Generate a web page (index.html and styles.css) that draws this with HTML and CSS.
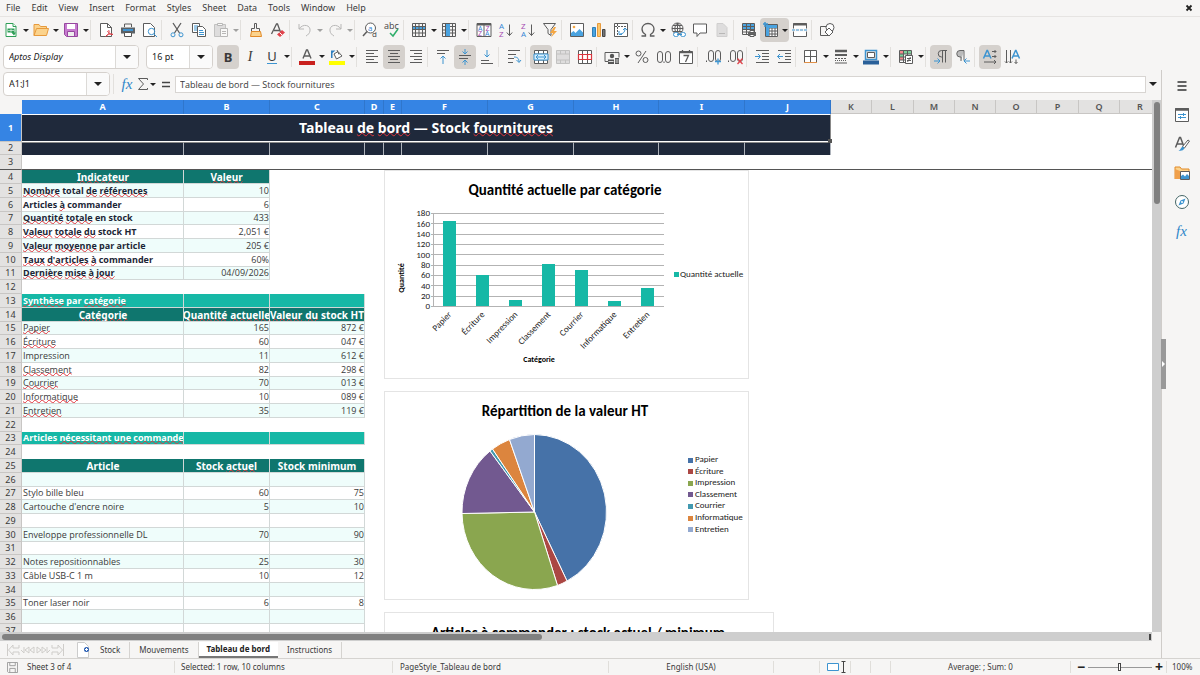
FILE: index.html
```html
<!DOCTYPE html>
<html lang="fr">
<head>
<meta charset="utf-8">
<title>Tableau de bord</title>
<link rel="stylesheet" href="styles.css">
</head>
<body>
<header class="menubar">
<nav class="menus">
<button>File</button><button>Edit</button><button>View</button><button>Insert</button><button>Format</button><button>Styles</button><button>Sheet</button><button>Data</button><button>Tools</button><button>Window</button><button>Help</button>
</nav>
<button class="close" aria-label="Close"><svg viewBox="0 0 8 8"><path d="M1.5 1.5l5 5m0-5l-5 5" stroke="#222" stroke-width="1.8"/></svg></button>
</header>

<div class="toolbar standard">
<button aria-label="New"><svg viewBox="0 0 16 16"><path class="gn" d="M3 1.500h7l3 3v10H3z"/><path class="gn" d="M10 1.500v3h3"/><path d="M4.500 6.500h7v4h-7zM8 10l5 .5-2 3z" fill="#2f9e57"/><path d="M5 8.500h6M8 7v3" stroke="#fff" stroke-width=".6"/></svg></button><i class="dd"></i>
<button aria-label="Open"><svg viewBox="0 0 16 16"><path d="M1 13.500v-11h5l1.500 2h6v2M1 13.500l2.500-7h12l-2 7z" fill="#fbd38d" stroke="#e79a3c"/></svg></button><i class="dd"></i>
<button aria-label="Save"><svg viewBox="0 0 16 16"><path d="M1.500 1.500h13v13h-11l-2-2z" fill="#c77bd0" stroke="#97489f"/><path d="M4 2h8v5H4z" fill="#fff"/><path d="M4.500 14v-4.500h7V14" fill="#eee" stroke="#97489f"/></svg></button><i class="dd"></i><i class="sep"></i>
<button aria-label="Export as PDF"><svg viewBox="0 0 16 16"><path class="k w" d="M2.500 1.500h7l4 4v9h-11z"/><path class="k" d="M9.500 1.500v4h4"/><path d="M8 14c3-2 4-4 2.500-6M9.500 9c1 2 3 4 5.500 3.500M7.500 14.500c2-2 4-3 7-2.500" fill="none" stroke="#e0434b"/></svg></button>
<button aria-label="Print"><svg viewBox="0 0 16 16"><path class="k" d="M4.500 5V2h7v3"/><path d="M1 5.500h14v6H1z" fill="#5c6267"/><path d="M3 8h10" stroke="#3f93d0" stroke-width="2"/><path d="M4.500 10.500h7v4h-7z" fill="#fff" stroke="#555"/></svg></button>
<button aria-label="Print preview"><svg viewBox="0 0 16 16"><path class="k w" d="M1.500 1.500h7l4 4v9h-11z"/><circle class="b" cx="9.500" cy="9.500" r="3.200"/><path class="b" d="M12 12l3 3"/></svg></button><i class="sep"></i>
<button aria-label="Cut"><svg viewBox="0 0 16 16"><path class="k" d="M4 1l6.500 10M12 1L5.500 11" stroke-width="1.300"/><circle class="b" cx="4" cy="12.800" r="2"/><circle class="b" cx="12" cy="12.800" r="2"/></svg></button>
<button aria-label="Copy"><svg viewBox="0 0 16 16"><path class="k w" d="M1.500 1.500h7v9h-7z"/><path class="b" d="M3 4h4M3 6h3M3 8h3"/><path class="k w" d="M6.500 4.500h5l3 3v7h-8z"/><path class="b" d="M8 8.500h4M8 10.500h5M8 12.500h5"/></svg></button>
<button class="off" aria-label="Paste"><svg viewBox="0 0 16 16"><path d="M1.500 2.500h11v12h-11z" fill="#bbb" stroke="#777"/><path class="k w" d="M4.500 1.500h5v2h-5zM7.500 6.500h7v8h-7z"/><path class="k" d="M9 9.500h4M9 11.500h4"/></svg></button><i class="dd off"></i><i class="sep"></i>
<button aria-label="Clone formatting"><svg viewBox="0 0 16 16"><path class="k" d="M6.500 1.500h2v5h3v3h-8v-3h3z"/><path d="M3.500 9.500h9l1 5H2.500z" fill="#fbd38d" stroke="#e28a28"/></svg></button>
<button aria-label="Clear direct formatting"><svg viewBox="0 0 16 16"><path class="k" d="M1.500 12L6.500 2h1l3 8M4 8.500h6" stroke-width="1.300"/><path d="M7 12.500l5-4.500 3 2.500-5 4.500z" fill="#e0434b"/><path d="M9.500 10.500l2.500 2.500" stroke="#fff"/></svg></button><i class="sep"></i>
<button class="off" aria-label="Undo"><svg viewBox="0 0 16 16"><path class="k" d="M2 2v5h5M2 7c4-6 12-4 11 2-.3 2-2 4-4 5"/></svg></button><i class="dd off"></i>
<button class="off" aria-label="Redo"><svg viewBox="0 0 16 16"><path class="k" d="M14 2v5H9M14 7C10 1 2 3 3 9c.3 2 2 4 4 5"/></svg></button><i class="dd off"></i><i class="sep"></i>
<button aria-label="Find and replace"><svg viewBox="0 0 16 16"><circle class="k w" cx="8.500" cy="6" r="5"/><path class="k" d="M5 9.500L1 14" stroke-width="1.500"/><text x="6" y="8.500" class="tb" font-size="8">a</text><text x="10" y="15" font-size="8" fill="#444">d</text></svg></button>
<button aria-label="Spelling"><svg viewBox="0 0 16 16"><text x="0" y="7" font-size="9" fill="#444">abc</text><path d="M6 11l3 3 5-7" fill="none" stroke="#2fae6a" stroke-width="1.500"/></svg></button><i class="sep"></i>
<button aria-label="Row"><svg viewBox="0 0 16 16"><path d="M1 4h14v4H1z" fill="#4aa3e0"/><path class="k" d="M1.500 1.500h13v13h-13zM1 4.500h14M1 7.500h14M1 11h14M4.500 1v14M8 1v14M11.500 1v14"/></svg></button><i class="dd"></i>
<button aria-label="Column"><svg viewBox="0 0 16 16"><path class="k" d="M1.500 1.500h13v13h-13zM1 4.500h14M1 8h14M1 11h14M4.500 1v14M8.500 1v14M11.500 1v14"/><path d="M5 2h4v12H5z" fill="#4aa3e0"/></svg></button><i class="dd"></i><i class="sep"></i>
<button aria-label="Sort"><svg viewBox="0 0 16 16"><path class="k w" d="M1 1.500h14v13H1zM8 2v12"/><path class="k" d="M1 2.500h14" stroke-width="2"/><text x="2" y="9" class="tb" font-size="7">A</text><text x="2" y="14" class="tp" font-size="7">Z</text><text x="9.500" y="9" class="tp" font-size="7">Z</text><text x="9" y="14" class="tb" font-size="7">A</text></svg></button>
<button aria-label="Sort ascending"><svg viewBox="0 0 16 16"><text x="1" y="7" class="tb" font-size="8">A</text><text x="1" y="15" class="tp" font-size="8">Z</text><path class="k" d="M11.500 2.500v11M8.800 10.500l2.700 3 2.700-3"/></svg></button>
<button aria-label="Sort descending"><svg viewBox="0 0 16 16"><text x="1" y="7" class="tp" font-size="8">Z</text><text x="1" y="15" class="tb" font-size="8">A</text><path class="k" d="M11.500 2.500v11M8.800 10.500l2.700 3 2.700-3"/></svg></button>
<button aria-label="AutoFilter"><svg viewBox="0 0 16 16"><path class="k" d="M1.500 1.500h12l-4.500 6v6l-3-2v-4z"/><path d="M12 5l-4 6h3l-2 4.500 6-6.500h-3l2-4z" fill="#f5a742"/></svg></button><i class="sep"></i>
<button aria-label="Image"><svg viewBox="0 0 16 16"><path class="k w" d="M1.500 1.500h13v13h-13z"/><circle cx="5" cy="5" r="1.300" fill="#f5a742"/><path d="M2 14l0-3 2.500-2 2 2 4-4L14 10.500V14z" fill="#4aa3e0"/></svg></button>
<button aria-label="Chart"><svg viewBox="0 0 16 16"><path d="M1.500 5.500h3v9h-3z" fill="#4aa3e0" stroke="#2e7fb8"/><path d="M6.500 1.500h3v13h-3z" fill="#fbc66b" stroke="#e79a3c"/><path d="M11.500 7.500h2.500v7h-2.500z" fill="#777" stroke="#444"/></svg></button>
<button aria-label="Pivot table"><svg viewBox="0 0 16 16"><path class="k w" d="M1.500 1.500h13v13h-13z"/><path class="k" d="M2 4.500h12M4.500 2v12" stroke-dasharray="2 1"/><path class="b" d="M6 9v3.500h3M7 12c3 0 5-2 5-5M10 8l2-2 2 2"/></svg></button><i class="sep"></i>
<button aria-label="Special character"><svg viewBox="0 0 16 16"><path class="k" d="M1.500 14h4v-1.500C3 11 2 9 2 7c0-3 2.500-5.500 6-5.500S14 4 14 7c0 2-1 4-3.500 5.500V14h4" stroke-width="1.300"/></svg></button><i class="dd"></i>
<button aria-label="Hyperlink"><svg viewBox="0 0 16 16"><circle class="k" cx="7.500" cy="6.500" r="5.500"/><path class="k" d="M2 6.500h11M3 3.500h9M3 9.500h9M7.500 1v11M7.500 1c-3.500 3-3.500 8 0 11M7.500 1c3.500 3 3.500 8 0 11"/><rect class="b w" x="3.500" y="10.500" width="5" height="4" rx="2"/><rect class="b w" x="10.500" y="10.500" width="5" height="4" rx="2"/><path class="b" d="M7 12.500h5"/></svg></button>
<button aria-label="Comment"><svg viewBox="0 0 16 16"><path class="k w" d="M1.500 2h13v9H8l-3 3.500V11H1.500z"/></svg></button>
<button class="off" aria-label="Headers and footers"><svg viewBox="0 0 16 16"><path d="M3 1.500h6l4 4v9H3z" fill="#bbb" stroke="#999"/><path class="k" d="M5 11.500h6"/></svg></button><i class="sep"></i>
<button aria-label="Define print area"><svg viewBox="0 0 16 16"><path d="M1 2h12v5H1z" fill="#4aa3e0"/><path class="k" d="M1.500 1.500h12v11h-12zM1 4.500h12M1 7.500h12M1 10h12M5.500 1v11M9.500 1v11"/><path d="M7 10h8v4H7z" fill="#666"/><path class="k w" d="M9 12.500h4v2H9zM9 8.500h4v2H9z"/></svg></button>
<span class="pressed"><button aria-label="Freeze rows and columns"><svg viewBox="0 0 16 16"><path d="M6 6h9v9H6z" fill="#fff"/><path class="k" d="M2.500 2.500h12v12h-12zM2 6h13M2 9h13M2 12h13M6 2v13M9 2v13M12 2v13"/><path d="M3 3h11v3H6v8H3z" fill="#4aa3e0"/><path class="b" d="M0 2h5M2 0v5" stroke-width="1.500"/></svg></button><i class="dd"></i></span>
<button aria-label="Split window"><svg viewBox="0 0 16 16"><path class="k w" d="M1.500 1.500h13v13h-13z"/><path class="k" d="M1 2.500h14" stroke-width="2"/><path d="M0 8h16" stroke="#f6f5f4" stroke-width="3"/><path class="b" d="M0 8h16" stroke-dasharray="3 1"/></svg></button><i class="sep"></i>
<button aria-label="Show draw functions"><svg viewBox="0 0 16 16"><path class="k" d="M1.500 4.500h8v9h-8z"/><circle class="k w" cx="11" cy="5.500" r="4"/><path class="k w" d="M10 6l4 4-4 4-4-4z"/></svg></button>
</div>

<div class="toolbar formatting">
<div class="combo font"><input aria-label="Font name" value="Aptos Display"><button aria-label="Font list"><i class="dd big"></i></button></div>
<div class="combo size"><input aria-label="Font size" value="16 pt"><button aria-label="Size list"><i class="dd big"></i></button></div>
<button class="on glyph" aria-label="Bold"><b>B</b></button>
<button class="glyph" aria-label="Italic"><em>I</em></button>
<button class="glyph" aria-label="Underline"><span class="u">U</span></button><i class="dd"></i><i class="sep"></i>
<button aria-label="Font color"><svg viewBox="0 0 16 16"><path class="k" d="M4 9.500L7.500 1h1L12 9.500M5.500 7h5" stroke-width="1.400"/><path d="M0 12h16v4H0z" fill="#c9211e"/></svg></button><i class="dd"></i>
<button aria-label="Background color"><svg viewBox="0 0 16 16"><path class="k w" d="M5 5l4-2.500L13 7 7.500 10z"/><path class="k" d="M8 1l2 4.500"/><path d="M2 1.500h4.500l-3 2.500v5H2z" fill="#2f7fc0"/><path d="M0 12h16v4H0z" fill="#ff0"/></svg></button><i class="dd"></i><i class="sep"></i>
<button aria-label="Align left"><svg viewBox="0 0 16 16"><path class="k" d="M2 1.500h12M2 4.500h8M2 7.500h12M2 10.500h8M2 13.500h12"/></svg></button>
<button class="on" aria-label="Align center"><svg viewBox="0 0 16 16"><path class="k" d="M2 1.500h12M4 4.500h8M2 7.500h12M4 10.500h8M2 13.500h12"/></svg></button>
<button aria-label="Align right"><svg viewBox="0 0 16 16"><path class="k" d="M2 1.500h12M6 4.500h8M2 7.500h12M6 10.500h8M2 13.500h12"/></svg></button><i class="sep"></i>
<button aria-label="Align top"><svg viewBox="0 0 16 16"><path class="k" d="M2 1.500h12M2 4.500h8"/><path class="b" d="M8 15V7M5.500 9.500L8 7l2.500 2.500"/></svg></button>
<button class="on" aria-label="Center vertically"><svg viewBox="0 0 16 16"><path class="k" d="M2 6.500h12M2 9.500h9"/><path class="b" d="M8 0v5M5.500 2.500L8 5l2.500-2.500M8 16v-5M5.500 13.500L8 11l2.500 2.500"/></svg></button>
<button aria-label="Align bottom"><svg viewBox="0 0 16 16"><path class="k" d="M2 11.500h8M2 14.500h12"/><path class="b" d="M8 1v7M5.500 5.500L8 8l2.500-2.500"/></svg></button><i class="sep"></i>
<button aria-label="Wrap text"><svg viewBox="0 0 16 16"><path class="k" d="M2 1.500h12M2 5.500h8M2 9.500h6M2 13.500h5"/><path class="b" d="M8 8c4 0 5 2 5 5M10.500 11l2.500 2.500 2-2.500"/></svg></button><i class="sep"></i>
<button class="on" aria-label="Merge and center"><svg viewBox="0 0 16 16"><path class="k w" d="M1.500 1.500h13v13h-13zM1 5h14M1 11h14M5.500 1v14M10.500 1v14"/><path d="M1 5h14v6H1z" fill="#d9effc" stroke="#3d94d0"/><path class="b" d="M3 8h10M5 6L3 8l2 2M11 6l2 2-2 2"/></svg></button>
<button class="off" aria-label="Merge cells"><svg viewBox="0 0 16 16"><path d="M1.500 1.500h13v13h-13zM1 5h14M1 11h14M5.500 1v4M10.500 1v4M5.500 11v4M10.500 11v4" fill="#bbb" stroke="#777"/></svg></button>
<button aria-label="Split cells"><svg viewBox="0 0 16 16"><path class="k w" d="M1.500 1.500h13v13h-13zM5.500 1v14M10.500 1v14"/><path d="M1 5.500h14M1 10.500h14M1.500 5v6M5.500 5v6M10.500 5v6M14.500 5v6" stroke="#d9363e" stroke-width="1.200"/></svg></button><i class="sep"></i>
<button aria-label="Currency"><svg viewBox="0 0 16 16"><path class="k" d="M1 12.500v-9h14v5M1 12.500h3"/><circle cx="8" cy="7" r="2.200" fill="#555"/><path d="M4 10.500h6V15H4zM11 9h4v6h-4z" fill="#555"/><path d="M4.500 12.500h5M11.500 11h3M11.500 13h3" stroke="#ddd"/></svg></button><i class="dd"></i>
<button aria-label="Percent"><svg viewBox="0 0 16 16"><circle class="k" cx="4.500" cy="4.500" r="2.500"/><circle class="k" cx="11.500" cy="11" r="2.500"/><path class="k" d="M12 2L4 14"/></svg></button>
<button aria-label="Number"><svg viewBox="0 0 16 16"><rect class="k" x="1.500" y="2.500" width="5" height="11" rx="2.500"/><rect class="k" x="9.500" y="2.500" width="5" height="11" rx="2.500"/><path d="M7.500 12.500h1v1.500h-1z" fill="#555"/></svg></button>
<button aria-label="Date"><svg viewBox="0 0 16 16"><path class="k w" d="M1.500 2.500h13v12h-13z"/><path class="k" d="M1 3.500h14M4.500 1v3M11.500 1v3M5.500 6.500h5L7.500 13" stroke-width="1.300"/></svg></button><i class="sep"></i>
<button aria-label="Add decimal place"><svg viewBox="0 0 16 16"><rect class="k" x="3.500" y="1.500" width="5" height="11" rx="2.500"/><rect class="k" x="10.500" y="1.500" width="5" height="11" rx="2.500"/><path d="M1 11.500h1V13H1z" fill="#555"/><path class="b" d="M10 12.500h6M13 9.500v6" stroke-width="1.300"/></svg></button>
<button aria-label="Delete decimal place"><svg viewBox="0 0 16 16"><rect class="k" x="3.500" y="1.500" width="5" height="11" rx="2.500"/><rect class="k" x="10.500" y="1.500" width="5" height="11" rx="2.500"/><path d="M1 11.500h1V13H1z" fill="#555"/><path d="M10.500 9.500l5 5.500m0-5.500l-5 5.500" stroke="#e0434b" stroke-width="1.300"/></svg></button><i class="sep"></i>
<button aria-label="Increase indent"><svg viewBox="0 0 16 16"><path class="k" d="M2 1.500h13M8 4.500h7M8 7.500h7M8 10.500h7M2 13.500h13"/><path class="b" d="M1 7.500h5M4 5l2.500 2.500L4 10"/></svg></button>
<button aria-label="Decrease indent"><svg viewBox="0 0 16 16"><path class="k" d="M2 1.500h13M9 4.500h6M9 7.500h6M9 10.500h6M2 13.500h13"/><path class="b" d="M1.500 7.500H7M4 5L1.500 7.500 4 10"/></svg></button><i class="sep"></i>
<button aria-label="Borders"><svg viewBox="0 0 16 16"><path class="k w" d="M1.500 1.500h12v12h-12zM7.500 2v12M2 7.500h12"/><path d="M1 13.500h13" stroke="#e09048"/></svg></button><i class="dd"></i>
<button aria-label="Border style"><svg viewBox="0 0 16 16"><path class="k" d="M2 2h12" stroke-width="2.500"/><path class="k" d="M2 6h12" stroke-width="2"/><path class="k" d="M2 9.500h12" stroke-dasharray="2 1"/><path class="k" d="M2 11.500h12" stroke-dasharray="1 1"/><path class="k" d="M2 14h12"/></svg></button><i class="dd"></i>
<button aria-label="Border color"><svg viewBox="0 0 16 16"><path d="M2.500 1.500h11v9h-11z" fill="#e7e5e2" stroke="#3d94d0" stroke-width="1.500"/><path class="k w" d="M4.500 3.500h7v5h-7z"/><path d="M0 11.500h16v4H0z" fill="#2a6099"/></svg></button><i class="dd"></i><i class="sep"></i>
<button aria-label="Conditional formatting"><svg viewBox="0 0 16 16"><path class="k w" d="M1.500 1.500h12v12h-12z"/><path d="M2 2h4v3H2zM2 8h4v3H2z" fill="#f08a8e"/><path d="M6 2h7v3H6zM2 5h4v3H2z" fill="#7fd09b"/><path class="k" d="M1 5h12M1 8h12M1 11h12M5.500 1v12M9.500 1v12"/><path class="k w" d="M7.500 6.500h7v8h-7z"/><path class="k" d="M9 9.500h4M9 11.500h4M12.500 8l-3 5"/></svg></button><i class="dd"></i><i class="sep"></i>
<button class="on" aria-label="Left to right"><svg viewBox="0 0 16 16"><path class="k" d="M14 1.500H8.500a3.200 3.200 0 0 0 0 6.500H9M9.500 1.500v12M12.500 1.500v12"/><path class="b" d="M1 12h6M4.500 9.500L7 12l-2.500 2.500"/></svg></button>
<button aria-label="Right to left"><svg viewBox="0 0 16 16"><path d="M9 1.500H5a3.200 3.200 0 0 0 0 6.500h1v4M9 1.500v10" fill="#bbb" stroke="#666"/><path class="b" d="M15 12H9M11.500 9.500L9 12l2.500 2.500"/></svg></button><i class="sep"></i>
<button class="on" aria-label="Text direction from left to right"><svg viewBox="0 0 16 16"><path class="b" d="M1.500 9.500L5 1.500h.5L9 9.500M2.500 7h5" stroke-width="1.500"/><path class="k" d="M10 2.500h4M10 7.500h4M2 13h12M12.500 1l1.500 1.500L12.500 4M12.500 6L14 7.500 12.500 9M12 11l2 2-2 2"/></svg></button>
<button aria-label="Text direction from top to bottom"><svg viewBox="0 0 16 16"><path class="b" d="M8 9.500l3.500-8h.5l3.500 8M9.500 7h5" stroke-width="1.500"/><path class="k" d="M2.500 1v13M6.500 1v13M12 10.500v4M1 12.500L2.500 14 4 12.500M5 12.500L6.500 14 8 12.500M10.500 13l1.500 1.500 1.500-1.500"/></svg></button>
</div>

<div class="workspace">
<main class="document">
<div class="formulabar">
<div class="combo namebox"><input aria-label="Name box" value="A1:J1"><button aria-label="Names"><i class="dd big"></i></button></div>
<i class="sep"></i>
<button class="fx" aria-label="Function wizard">fx</button>
<button class="sigma" aria-label="Select function"><svg viewBox="0 0 12 14"><path class="k" d="M10.500 3V1.500h-9L6.500 7l-5 5.500h9V11"/></svg></button><i class="dd"></i>
<button class="equals" aria-label="Formula"><svg viewBox="0 0 10 10"><path d="M1 3.500h8M1 7.500h8" stroke="#444" stroke-width="1.500"/></svg></button>
<input class="formula" aria-label="Formula input" value="Tableau de bord — Stock fournitures">
<button class="expand" aria-label="Expand formula bar"><i class="dd big"></i></button>
</div>
<div class="sheetrow">
<div class="sheet">
<table class="grid">
<colgroup><col class="c0"><col class="ca"><col class="cb"><col class="cc"><col class="cd"><col class="ce"><col class="cf"><col class="cf"><col class="ch"><col class="cf"><col class="cf"><col class="ck"><col class="cl"><col class="ck"><col class="ck"><col class="ck"><col class="cl"><col class="ck"><col></colgroup>
<thead><tr><th class="corner"></th><th>A</th><th>B</th><th>C</th><th>D</th><th>E</th><th>F</th><th>G</th><th>H</th><th>I</th><th>J</th><th class="n">K</th><th class="n">L</th><th class="n">M</th><th class="n">N</th><th class="n">O</th><th class="n">P</th><th class="n">Q</th><th class="n r">R</th></tr></thead>
<tbody class="frozen">
<tr class="r1"><th>1</th><td class="title" colspan="10">Tableau <s>de</s> <s>bord</s> — Stock <s>fournitures</s><i class="handle"></i></td></tr>
<tr class="r2"><th>2</th><td></td><td></td><td></td><td></td><td></td><td></td><td></td><td></td><td></td><td></td></tr>
<tr class="r3"><th>3</th><td colspan="18"></td></tr>
</tbody>
<tbody class="body">
<tr class="head"><th>4</th><td><s>Indicateur</s></td><td><s>Valeur</s></td></tr>
<tr class="t k2"><th>5</th><td><s>Nombre</s> total <s>de</s> <s>références</s></td><td>10</td></tr>
<tr class="k2"><th>6</th><td>Articles <s>à</s> commander</td><td>6</td></tr>
<tr class="t k2"><th>7</th><td><s>Quantité</s> <s>totale</s> en stock</td><td>433</td></tr>
<tr class="k2"><th>8</th><td><s>Valeur</s> <s>totale</s> <s>du</s> stock HT</td><td>2,051 €</td></tr>
<tr class="t k2"><th>9</th><td><s>Valeur</s> <s>moyenne</s> par article</td><td>205 €</td></tr>
<tr class="k2"><th>10</th><td><s>Taux</s> <s>d'articles</s> <s>à</s> commander</td><td>60%</td></tr>
<tr class="t k2"><th>11</th><td><s>Dernière</s> <s>mise</s> <s>à</s> <s>jour</s></td><td>04/09/2026</td></tr>
<tr class="none"><th>12</th><td colspan="3"></td></tr>
<tr class="band"><th>13</th><td><s>Synthèse</s> par <s>catégorie</s></td><td></td><td></td></tr>
<tr class="head"><th>14</th><td><s>Catégorie</s></td><td class="clip"><span><s>Quantité</s> <s>actuelle</s></span></td><td class="clip"><span><s>Valeur</s> <s>du</s> stock HT</span></td></tr>
<tr class="t"><th>15</th><td><s>Papier</s></td><td>165</td><td>872 €</td></tr>
<tr><th>16</th><td><s>Écriture</s></td><td>60</td><td>047 €</td></tr>
<tr class="t"><th>17</th><td>Impression</td><td>11</td><td>612 €</td></tr>
<tr><th>18</th><td><s>Classement</s></td><td>82</td><td>298 €</td></tr>
<tr class="t"><th>19</th><td><s>Courrier</s></td><td>70</td><td>013 €</td></tr>
<tr><th>20</th><td><s>Informatique</s></td><td>10</td><td>089 €</td></tr>
<tr class="t"><th>21</th><td><s>Entretien</s></td><td>35</td><td>119 €</td></tr>
<tr class="none"><th>22</th><td colspan="3"></td></tr>
<tr class="band"><th>23</th><td>Articles <s>nécessitant</s> <s>une</s> <s>commande</s></td><td></td><td></td></tr>
<tr class="none"><th>24</th><td colspan="3"></td></tr>
<tr class="head"><th>25</th><td>Article</td><td>Stock <s>actuel</s></td><td>Stock minimum</td></tr>
<tr class="t"><th>26</th><td></td><td></td><td></td></tr>
<tr><th>27</th><td>Stylo bille bleu</td><td>60</td><td>75</td></tr>
<tr class="t"><th>28</th><td>Cartouche d'encre noire</td><td>5</td><td>10</td></tr>
<tr><th>29</th><td></td><td></td><td></td></tr>
<tr class="t"><th>30</th><td>Enveloppe professionnelle DL</td><td>70</td><td>90</td></tr>
<tr><th>31</th><td></td><td></td><td></td></tr>
<tr class="t"><th>32</th><td>Notes repositionnables</td><td>25</td><td>30</td></tr>
<tr><th>33</th><td>Câble USB-C 1 m</td><td>10</td><td>12</td></tr>
<tr class="t"><th>34</th><td></td><td></td><td></td></tr>
<tr><th>35</th><td>Toner laser noir</td><td>6</td><td>8</td></tr>
<tr class="t"><th>36</th><td></td><td></td><td></td></tr>
<tr><th>37</th><td></td><td></td><td></td></tr>
</tbody>
</table>

<svg class="chart chart-bar" viewBox="0 0 364 208">
<text class="ct" x="181" y="25">Quantité actuelle par catégorie</text>
<path class="gl" d="M47 43.500h233M47 53.500h233M47 64.500h233M47 74.500h233M47 84.500h233M47 95.500h233M47 105.500h233M47 115.500h233M47 126.500h233M47 136.500h233M49.500 43v93"/>
<g class="ya"><text x="46" y="46">180</text><text x="46" y="57">160</text><text x="46" y="67">140</text><text x="46" y="77">120</text><text x="46" y="88">100</text><text x="46" y="98">80</text><text x="46" y="108">60</text><text x="46" y="119">40</text><text x="46" y="129">20</text><text x="46" y="139">0</text></g>
<g class="bars"><rect x="59" y="51" width="13" height="85"/><rect x="92" y="105" width="13" height="31"/><rect x="125" y="130" width="13" height="6"/><rect x="158" y="94" width="13" height="42"/><rect x="191" y="100" width="13" height="36"/><rect x="224" y="131" width="13" height="5"/><rect x="257" y="118" width="13" height="18"/></g>
<g class="xa"><text transform="translate(68 145) rotate(-46)">Papier</text><text transform="translate(101 145) rotate(-46)">Écriture</text><text transform="translate(134 145) rotate(-46)">Impression</text><text transform="translate(167 145) rotate(-46)">Classement</text><text transform="translate(200 145) rotate(-46)">Courrier</text><text transform="translate(233 145) rotate(-46)">Informatique</text><text transform="translate(266 145) rotate(-46)">Entretien</text></g>
<text class="ax" x="155" y="192">Catégorie</text>
<text class="ax" transform="translate(20 108) rotate(-90)">Quantité</text>
<path d="M290 102h5v5h-5z" fill="#16b8a6"/><text class="lg" x="296" y="107">Quantité actuelle</text>
</svg>

<svg class="chart chart-pie" viewBox="0 0 364 208">
<text class="ct" x="181" y="25">Répartition de la valeur HT</text>
<g stroke="#fff" stroke-linejoin="round">
<path fill="#4672a8" d="M150.500 121V43.500A72.500 77.500 0 0 1 183 190z"/>
<path fill="#ab4744" d="M150.500 121L183 190A72.500 77.500 0 0 1 173.500 194.500z"/>
<path fill="#8aa64f" d="M150.500 121L173.500 194.500A72.500 77.500 0 0 1 78 122.500z"/>
<path fill="#725990" d="M150.500 121L78 122.500A72.500 77.500 0 0 1 106 60z"/>
<path fill="#4299b0" d="M150.500 121L106 60A72.500 77.500 0 0 1 108.500 58z"/>
<path fill="#dc853e" d="M150.500 121L108.500 58A72.500 77.500 0 0 1 125.500 48.500z"/>
<path fill="#93a9d0" d="M150.500 121L125.500 48.500A72.500 77.500 0 0 1 150.500 43.500z"/>
</g>
<path fill="#4672a8" d="M304 67h5v5h-5z"/><path fill="#ab4744" d="M304 78h5v5h-5z"/><path fill="#8aa64f" d="M304 90h5v5h-5z"/><path fill="#725990" d="M304 101h5v5h-5z"/><path fill="#4299b0" d="M304 113h5v5h-5z"/><path fill="#dc853e" d="M304 125h5v5h-5z"/><path fill="#93a9d0" d="M304 136h5v5h-5z"/>
<g class="lg"><text x="311" y="71">Papier</text><text x="311" y="83">Écriture</text><text x="311" y="94">Impression</text><text x="311" y="106">Classement</text><text x="311" y="117">Courrier</text><text x="311" y="129">Informatique</text><text x="311" y="141">Entretien</text></g>
</svg>

<svg class="chart chart-stock" viewBox="0 0 389 208"><text class="ct" x="194" y="26">Articles à commander : stock actuel / minimum</text></svg>
</div>
<div class="vscroll"><i></i></div>
</div>
<div class="hscroll"><i></i><b></b></div>
<div class="tabs">
<span class="tabnav"><button aria-label="First sheet"><svg viewBox="0 0 14 14"><path d="M1.500 1v12M13 2v3H7V2L2.500 7 7 12V9h6v3"/></svg></button><button aria-label="Previous sheet"><svg viewBox="0 0 14 14"><path d="M13 4v6L9 7zM8 4v6L4 7zM3 4v6L0 7"/></svg></button><button aria-label="Next sheet"><svg viewBox="0 0 14 14"><path d="M1 4v6l4-3zM6 4v6l4-3zM11 4v6l3-3"/></svg></button><button aria-label="Last sheet"><svg viewBox="0 0 14 14"><path d="M12.500 1v12M1 2v3h6V2l4.500 5L7 12V9H1v3"/></svg></button></span>
<button class="addsheet" aria-label="Add sheet"><svg viewBox="0 0 14 16"><path d="M1.500.5h7l4 4v11h-11z" fill="#fff" stroke="#ccc"/><circle cx="10.500" cy="7.500" r="2.500" fill="#2a5fb4"/><path d="M9 7.500h3M10.500 6v3" stroke="#fff"/></svg></button>
<button class="tab">Stock</button><button class="tab">Mouvements</button><button class="tab active">Tableau de bord</button><button class="tab">Instructions</button>
</div>
</main>
<aside class="sidebar">
<button aria-label="Sidebar settings"><svg viewBox="0 0 16 16"><path d="M3.500 4h9M3.500 8h9M3.500 12h9" stroke="#333" stroke-width="1.500"/></svg></button>
<button aria-label="Properties"><svg viewBox="0 0 16 16"><path class="k w" d="M1.500 1.500h13v13h-13z"/><path class="k" d="M1 2.500h14" stroke-width="2.500"/><path class="b" d="M4 7.500h8M9.500 6v3M4 10.500h8M6.500 9v3"/></svg></button>
<button aria-label="Styles"><svg viewBox="0 0 16 16"><path class="k" d="M1.500 11.500L5.500 1.500h1l3 8M3 8h6" stroke-width="1.500"/><path class="k w" d="M14 4l1.500 1-5 7-2-1.500z"/><path d="M8.500 10.500l2 1.500c-1 3-4 3-6 2.500 2-.5 2-2.500 4-4z" fill="#3d94d0"/></svg></button>
<button aria-label="Gallery"><svg viewBox="0 0 16 16"><path d="M1 14V2h5l1.500 2H15v3" fill="#fbd38d" stroke="#e28a28"/><path d="M1 4v10h5V6z" fill="#f0a04b"/><path class="k w" d="M6.500 6.500h9v8h-9z"/><path d="M7 14v-3l2-1.500 2 2L13 9l2 2v3z" fill="#3d94d0"/></svg></button>
<button aria-label="Navigator"><svg viewBox="0 0 16 16"><circle cx="8" cy="8" r="6.500" fill="#fff" stroke="#466"/><path d="M11.500 4.500l-2 5-5 2 2-5z" fill="#3d94d0"/><circle cx="8" cy="8" r="1" fill="#fff"/></svg></button>
<button class="fx" aria-label="Functions">fx</button>
<i class="grip"></i>
</aside>
</div>

<footer class="statusbar">
<span class="s1"><svg viewBox="0 0 12 12"><path d="M.5.5h11v11h-10l-1-1zM3 .5V4h6V.5M3 11.500V7h6v4.500" fill="none" stroke="#999"/></svg>Sheet 3 of 4</span>
<span class="s2">Selected: 1 row, 10 columns</span>
<span class="s3">PageStyle_Tableau de bord</span>
<span class="s4">English (USA)</span>
<span class="s5"></span>
<span class="s6"><svg viewBox="0 0 20 12"><path d="M.5 2.500h11v7H.5z" fill="#fff" stroke="#3d94d0"/><path d="M14.500.5h4M14.500 11.500h4M16.500 1v10" stroke="#444" fill="none"/></svg></span>
<span class="s7"></span><span class="s7"></span>
<span class="s8">Average: ; Sum: 0</span>
<span class="s9"><button aria-label="Zoom out">−</button><input type="range" aria-label="Zoom" min="0" max="100" value="49"><button aria-label="Zoom in">+</button></span>
<span class="s10">100%</span>
</footer>
</body>
</html>
```
FILE: styles.css
```css
* { box-sizing: border-box; }
body {
  margin: 0;
  height: 100vh;
  display: flex;
  flex-direction: column;
  overflow: hidden;
  background: #f6f5f4;
  color: #3a3a3a;
  font: 9px/12px "Noto Sans", sans-serif;
}
button, input { font: inherit; color: inherit; margin: 0; padding: 0; border: 0; background: none; }
button { display: inline-flex; align-items: center; justify-content: center; }
svg { display: block; }
.k { stroke: #5c5c5c; fill: none; }
.b { stroke: #3d94d0; fill: none; }
.gn { stroke: #2f9e57; fill: #fff; }
.w { fill: #fff; }
.tb { fill: #3584d4; }
.tp { fill: #a446b0; }

.menubar { display: flex; justify-content: space-between; height: 17px; flex: none; padding: 0 6px 0 6px; border-bottom: 1px solid #e6e4e2; }
.menus { display: flex; gap: 11px; }
.close { width: 10px; }
.close svg { width: 8px; height: 8px; }

.toolbar { display: flex; align-items: center; height: 27px; flex: none; }
.toolbar button { width: 22px; height: 24px; flex: none; border-radius: 4px; }
.toolbar svg { width: 16px; height: 16px; overflow: visible; font-family: "Open Sans", sans-serif; }
.toolbar .on, .pressed { background: #d5d1cd; border-radius: 4px; }
.pressed { display: flex; align-items: center; }
.pressed button { width: 21px; }
.off { opacity: .4; }
.sep { width: 5px; height: 20px; flex: none; border-left: 1px solid #e2e0dd; }
.dd { width: 8px; flex: none; display: flex; justify-content: center; }
.dd::before { content: ""; border: 3px solid transparent; border-top-color: #222; border-bottom: 0; }
.dd.big::before { border-width: 4px 4px 0; }
.combo { display: flex; height: 24px; flex: none; background: #fff; border: 1px solid #d5d1cd; border-radius: 4px; overflow: hidden; }
.combo input { flex: 1; min-width: 0; padding-left: 5px; color: #222; }
.combo button { width: 23px; height: 22px; border-left: 1px solid #dcdad7; border-radius: 0; background: #fafafa; }
.standard { height: 26px; }
.formatting { padding-left: 3px; }
.font { width: 136px; margin-right: 7px; }
.font input { font-style: italic; }
.size { width: 67px; margin-right: 4px; }
.glyph { font-size: 13px; }
.glyph em { font-family: "Liberation Serif", serif; font-size: 14px; }
.u { line-height: 14px; border-bottom: 1px solid #3d94d0; }

.workspace { flex: 1; display: flex; min-height: 0; }
.document { flex: 1; min-width: 0; display: flex; flex-direction: column; border-right: 1px solid #cfccc9; }
.formulabar { display: flex; align-items: center; height: 30px; flex: none; padding: 0 1px 2px 3px; }
.namebox { width: 107px; margin-right: 3px; }
.formulabar .fx { width: 18px; }
.fx { font: italic 15px/18px "Liberation Serif", serif; color: #2f86c9; }
.sigma { width: 13px; }
.sigma svg { width: 12px; height: 14px; }
.equals { width: 18px; }
.equals svg { width: 10px; height: 10px; }
.formula { flex: 1; min-width: 0; height: 17px; padding-left: 4px; background: #fff; border: 1px solid #d8d5d2; font-family: "Open Sans", sans-serif; }
.expand { width: 14px; height: 20px; }

.sheetrow { flex: 1; display: flex; min-height: 0; }
.sheet { flex: 1; position: relative; min-width: 0; overflow: hidden; background: #fff; }
.grid { width: 100%; table-layout: fixed; border-collapse: separate; border-spacing: 0; }
.c0 { width: 22px; } .ca { width: 162px; } .cb { width: 86px; } .cc { width: 95px; } .cd { width: 19px; } .ce { width: 18px; }
.cf { width: 86px; } .ch { width: 85px; } .ck { width: 41px; } .cl { width: 42px; }
.grid th, .grid td { height: 14px; padding: 0; line-height: 12px; white-space: nowrap; overflow: hidden; }
.grid tbody th { font-weight: 400; background: #e3e2e1; border-right: 1px solid #c8c6c4; border-bottom: 1px solid #c8c6c4; }
.grid thead th { background: #3584e4; color: #fff; border-right: 1px solid #2f76cc; }
.grid thead .n { background: #e3e2e1; color: #555; border-right-color: #c8c6c4; border-bottom: 1px solid #c8c6c4; font-weight: 600; }
.grid thead .corner { background: #f6f5f4; border: 0; }
.grid thead .r { border-right: 0; text-align: left; padding-left: 17px; }
s { text-decoration: underline wavy #e0343c 1px; text-decoration-skip-ink: none; text-underline-offset: -1px; }
.grid .r1 th { background: #3584e4; color: #fff; font-weight: 700; }
.grid .r1 th, .grid .r1 td { height: 28px; }
.grid .title { position: relative; overflow: visible; background: #1f293b; color: #fff; text-align: center; font-size: 14px; font-weight: 700; border: 1px solid #fff; border-left: 0; border-right-color: #888; }
.handle { position: absolute; right: -2px; bottom: -2px; width: 4px; height: 4px; background: #555; }
.grid .r2 td, .grid .r2 th { height: 13px; }
.grid .r2 td { background: #1f293b; border-right: 1px solid #aeb3bb; border-top: 1px solid #8a8a8a; }
.grid .r3 th, .grid .r3 td { height: 15px; border-bottom: 1px solid #555; }
.body tr:nth-child(4n) > * { height: 13px; }
.body td { border-right: 1px solid #d2d8d7; border-bottom: 1px solid #d2d8d7; text-align: right; font-family: "Open Sans", sans-serif; }
.body td:nth-child(2) { text-align: left; padding-left: 1px; }
.body .k2 td:nth-child(2) { font-weight: 700; color: #1c2636; }
.body .t td { background: #effdfb; }
.body .head td { background: #0f766e; color: #fff; text-align: center; font-family: "Noto Sans", sans-serif; font-size: 10px; font-weight: 700; }
.body .band td { background: #16b8a6; color: #fff; font-weight: 700; }
.body .none td { border: 0; }
.clip span { display: flex; justify-content: center; gap: 3px; }

.chart { position: absolute; left: 384px; width: 365px; height: 209px; background: #fff; border: solid #e4e4e4; border-width: 0 1px 1px 0; box-shadow: inset 1px 1px #e4e4e4; font-family: Carlito, Lato, sans-serif; fill: #222; }
.chart-bar { top: 70px; }
.chart-pie { top: 291px; }
.chart-stock { top: 512px; width: 390px; }
.ct { font-size: 15px; font-weight: 700; text-anchor: middle; fill: #000; }
.gl { stroke: #b3b3b3; fill: none; }
.ya { font-size: 9px; text-anchor: end; }
.xa { font-size: 9px; text-anchor: end; }
.bars { fill: #16b8a6; }
.ax { font-size: 8px; font-weight: 700; text-anchor: middle; fill: #000; }
.lg { font-size: 9px; }

.vscroll { width: 9px; background: #cecece; padding: 2px 1px 0 2px; }
.vscroll i { display: block; height: 102px; width: 6px; border-radius: 3px; background: #808080; }
.hscroll { display: flex; justify-content: space-between; align-items: center; height: 9px; flex: none; margin-right: 9px; padding: 0 1px 0 2px; background: #cecece; }
.hscroll i { width: 47%; height: 6px; border-radius: 3px; background: #808080; }
.hscroll b { width: 2px; height: 6px; background: #444; }

.tabs { display: flex; align-items: center; height: 17px; flex: none; font-size: 8px; }
.tabnav { display: flex; padding-left: 6px; width: 74px; gap: 1px; }
.tabnav svg { width: 14px; height: 14px; fill: none; stroke: #cfcdca; }
.addsheet { width: 17px; }
.addsheet svg { width: 14px; height: 16px; }
.tab { height: 16px; padding: 0 9px; border-right: 1px solid #d5d3d0; }
.tab.active { background: #fff; border-right: 0; border-bottom: 2px solid #777; font-weight: 700; color: #222; padding: 0 8px; }

.sidebar { position: relative; width: 38px; flex: none; display: flex; flex-direction: column; align-items: center; padding: 6px 0 0 1px; gap: 9px; }
.sidebar button { width: 24px; height: 20px; }
.sidebar svg { width: 16px; height: 16px; }
.grip { position: absolute; left: -1px; top: 269px; width: 5px; height: 50px; background: #999; }
.grip::after { content: ""; position: absolute; left: 1px; top: 22px; border: 3px solid transparent; border-left-color: #fff; border-right: 0; }

.statusbar { display: flex; align-items: center; height: 17px; flex: none; border-top: 1px solid #d5d3d0; font-size: 8px; }
.statusbar > span { display: flex; align-items: center; height: 12px; flex: none; border-right: 1px solid #e0deda; }
.s1 { width: 175px; padding-left: 7px; gap: 9px; }
.s1 svg { width: 11px; height: 11px; }
.s2 { width: 218px; padding-left: 6px; }
.s3 { width: 216px; padding-left: 7px; }
.s4 { width: 165px; justify-content: center; }
.s5 { width: 46px; }
.s6 { width: 31px; padding-left: 7px; }
.s6 svg { width: 20px; height: 12px; }
.s7 { width: 20px; }
.statusbar .s8 { flex: 1; justify-content: center; }
.s9 { width: 96px; padding-left: 5px; gap: 2px; }
.s9 button { width: 10px; font-size: 14px; font-weight: 700; color: #222; }
.s9 input { -webkit-appearance: none; appearance: none; width: 64px; height: 10px; background: linear-gradient(#999, #999) center / 100% 1px no-repeat; }
.s9 input::-webkit-slider-thumb { -webkit-appearance: none; width: 3px; height: 8px; background: #fff; border: 1px solid #444; }
.statusbar .s10 { width: 33px; border: 0; padding-left: 5px; }
```
